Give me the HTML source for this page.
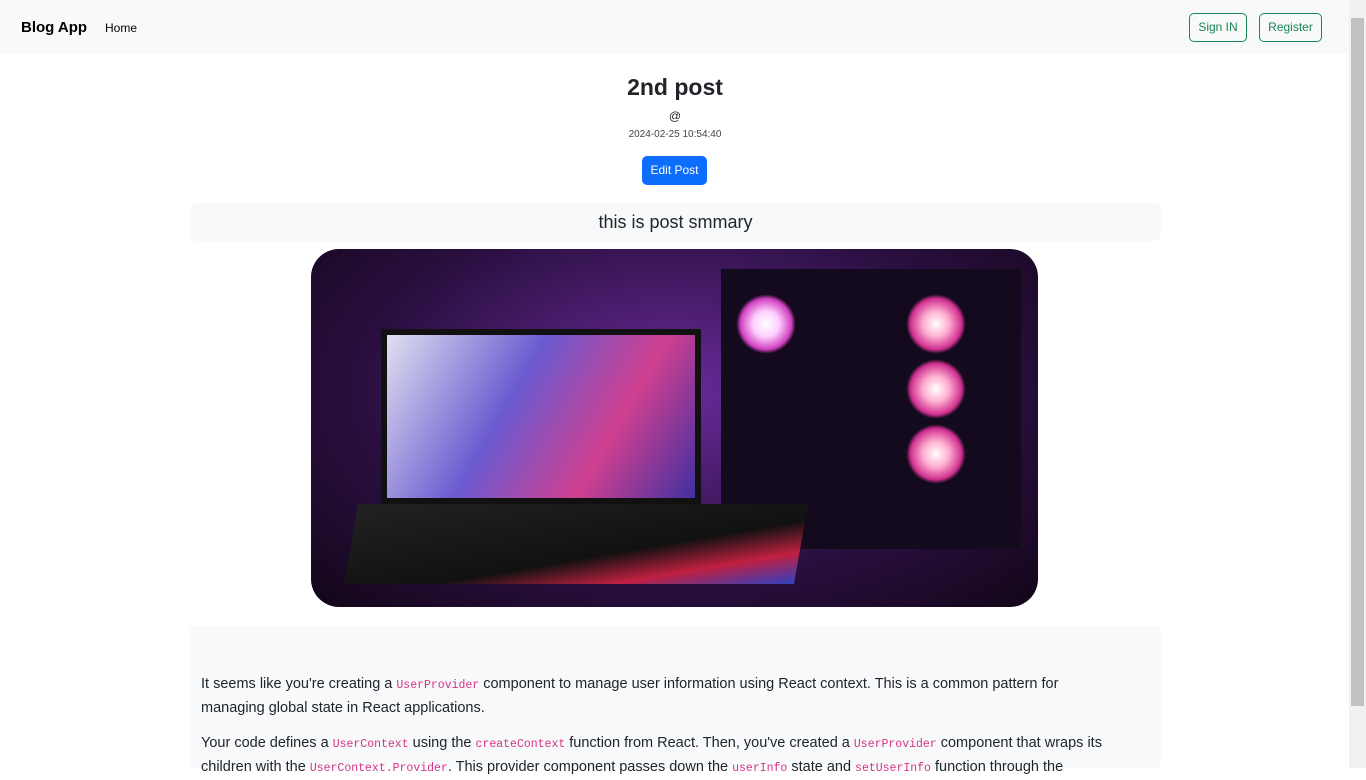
<!DOCTYPE html>
<html><head><meta charset="utf-8"><style>
*{box-sizing:border-box}
body{margin:0;width:1366px;height:768px;overflow:hidden;font-family:"Liberation Sans",sans-serif;color:#212529;background:#fff;position:relative}
.nav{position:absolute;left:0;top:0;width:1349px;height:54px;background:#f8f9fa}
.brand{position:absolute;left:21px;top:19px;font-weight:bold;font-size:15px;color:#000}
.home{position:absolute;left:105px;top:21px;font-size:12px;color:#000}
.btn{position:absolute;top:13px;height:29px;border:1px solid #198754;border-radius:5px;color:#198754;font-size:12px;line-height:27px;text-align:center}
.sb{position:absolute;right:0;top:0;width:17px;height:768px;background:#f1f1f1}
.sb .th{position:absolute;left:2px;top:18px;width:13px;height:688px;background:#c1c1c1}
.c{position:absolute;text-align:center;width:100%;left:-8px}
code{font-family:"Liberation Mono",monospace;color:#d63384;font-size:11.5px}
.img{position:absolute;left:311px;top:249px;width:727px;height:358px;border-radius:28px;overflow:hidden;background:radial-gradient(ellipse at 50% 40%,#6a2a9a,#2a0f40 60%,#120618)}
</style></head><body>
<div class="nav"><div class="brand">Blog App</div><div class="home">Home</div>
<div class="btn" style="left:1189px;width:58px">Sign IN</div>
<div class="btn" style="left:1259px;width:63px">Register</div></div>
<div class="sb"><div class="th"></div></div>
<div class="c" style="top:74px;font-size:23px;font-weight:bold">2nd post</div>
<div class="c" style="top:109px;font-size:12px">@</div>
<div class="c" style="top:129px;font-size:10px;color:#444">2024-02-25 10:54:40</div>
<div style="position:absolute;left:642px;top:156px;width:65px;height:29px;background:#0d6efd;color:#fff;border-radius:5px;font-size:12px;line-height:29px;text-align:center">Edit Post</div>
<div style="position:absolute;left:190px;top:203px;width:971px;height:38px;background:#f8f9fa;border-radius:6px;text-align:center;font-size:18px;line-height:38px">this is post smmary</div>
<div class="img">
<div style="position:absolute;left:70px;top:80px;width:320px;height:175px;background:linear-gradient(120deg,#e0e0f0,#6a5ad0 40%,#d04090 70%,#4030a0);border:6px solid #111"></div>
<div style="position:absolute;left:410px;top:20px;width:300px;height:280px;background:#140a1e"></div>
<div style="position:absolute;left:425px;top:45px;width:60px;height:60px;border-radius:50%;background:radial-gradient(#fff,#ffd0ff 30%,#d040c0 60%,transparent 70%)"></div>
<div style="position:absolute;left:595px;top:45px;width:60px;height:60px;border-radius:50%;background:radial-gradient(#fff,#ffb0d0 30%,#d03090 60%,transparent 70%)"></div>
<div style="position:absolute;left:595px;top:110px;width:60px;height:60px;border-radius:50%;background:radial-gradient(#fff,#ffb0d0 30%,#d03090 60%,transparent 70%)"></div>
<div style="position:absolute;left:595px;top:175px;width:60px;height:60px;border-radius:50%;background:radial-gradient(#fff,#ffb0d0 30%,#d03090 60%,transparent 70%)"></div>
<div style="position:absolute;left:40px;top:255px;width:450px;height:80px;background:linear-gradient(170deg,#222,#111 60%,#c02040 80%,#3040c0);transform:skewX(-10deg)"></div>
</div>
<div style="position:absolute;left:190px;top:626px;width:971px;height:142px;background:#f8f9fa;border-radius:6px"></div>
<div style="position:absolute;left:201px;top:673px;width:960px;font-size:14.5px;line-height:22px;white-space:nowrap">
<p style="margin:0 0 13px">It seems like you're creating a <code>UserProvider</code> component to manage user information using React context. This is a common pattern for<br>managing global state in React applications.</p>
<p style="margin:0">Your code defines a <code>UserContext</code> using the <code>createContext</code> function from React. Then, you've created a <code>UserProvider</code> component that wraps its<br>children with the <code>UserContext.Provider</code>. This provider component passes down the <code>userInfo</code> state and <code>setUserInfo</code> function through the</p>
</div>
</body></html>
